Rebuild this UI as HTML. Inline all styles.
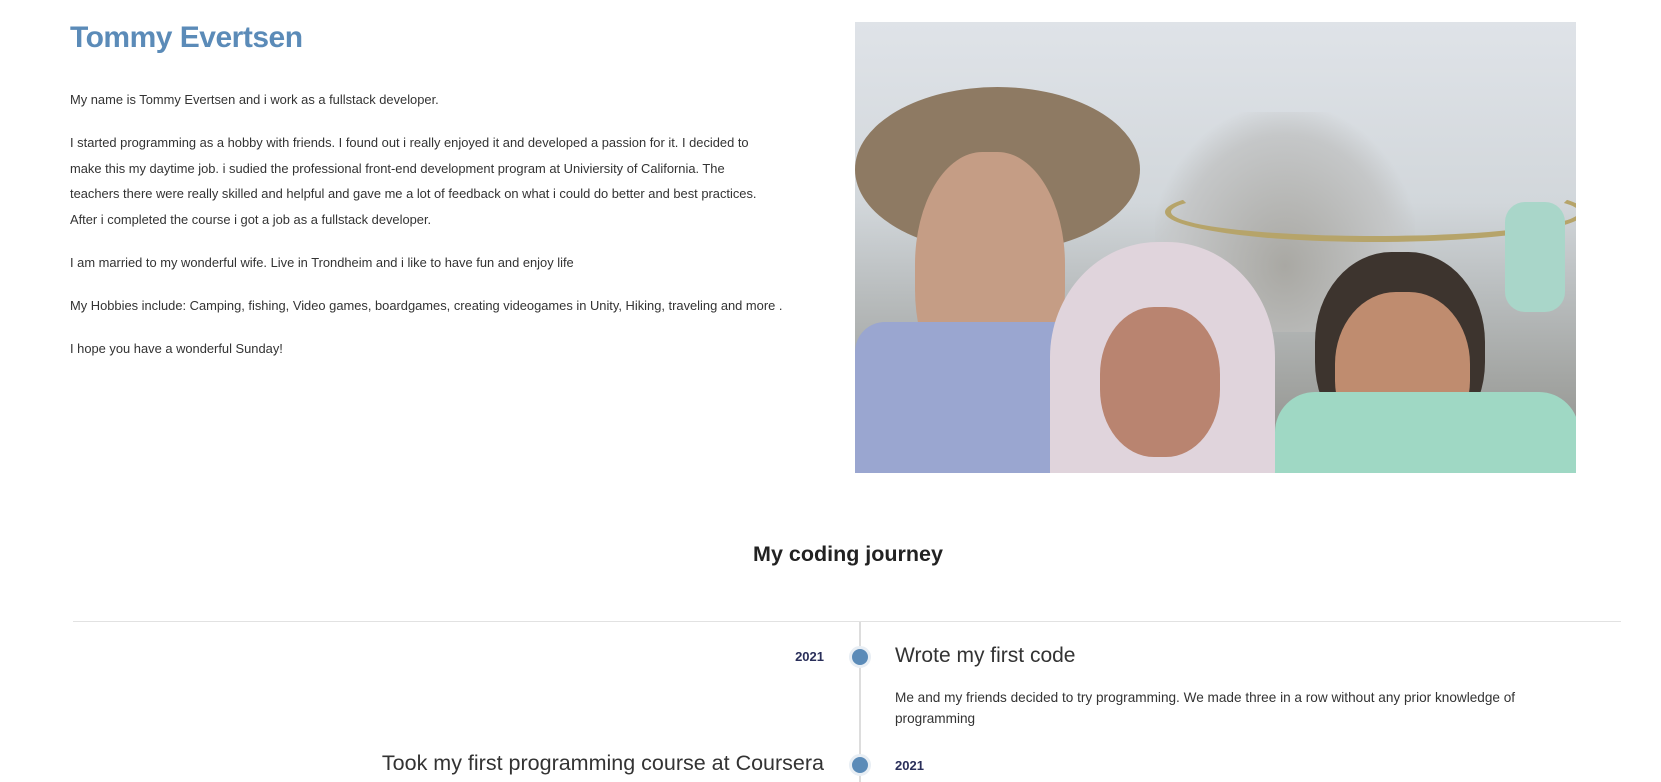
<!DOCTYPE html>
<html><head><meta charset="utf-8"><style>
*{margin:0;padding:0;box-sizing:border-box}
body{width:1661px;height:779px;overflow:hidden;background:#fff;font-family:"Liberation Sans",sans-serif;color:#333;position:relative}
h1{position:absolute;left:70px;top:21px;font-size:30px;font-weight:bold;color:#5b8bb8;letter-spacing:-0.5px}
.p{position:absolute;left:70px;font-size:12.9px;color:#333;white-space:nowrap}
.photo{position:absolute;left:855px;top:22px;width:721px;height:451px;overflow:hidden;background:linear-gradient(#dfe3e8,#d2d7db 40%,#b9bdbe 60%,#8c8c86)}
.photo div{position:absolute}
h2{position:absolute;left:0;width:1696px;text-align:center;top:542px;font-size:21.5px;font-weight:bold;color:#222}
.hr{position:absolute;left:73px;width:1548px;top:621px;height:1px;background:#e2e2e2}
.vl{position:absolute;left:859px;top:622px;width:2px;height:160px;background:#ddd}
.dot{position:absolute;width:22px;height:22px;border-radius:50%;background:#5b8bb8;border:3px solid #e8eef4;left:849px}
.yr{position:absolute;font-size:13px;font-weight:bold;color:#2a2f5a}
.t{position:absolute;font-size:21px;font-weight:300;color:#333;white-space:nowrap}
</style></head><body>
<h1>Tommy Evertsen</h1>
<div class="p" style="top:92px">My name is Tommy Evertsen and i work as a fullstack developer.</div>
<div class="p" style="top:130px;line-height:25.7px">I started programming as a hobby with friends. I found out i really enjoyed it and developed a passion for it. I decided to<br>make this my daytime job. i sudied the professional front-end development program at Univiersity of California. The<br>teachers there were really skilled and helpful and gave me a lot of feedback on what i could do better and best practices.<br>After i completed the course i got a job as a fullstack developer.</div>
<div class="p" style="top:255px">I am married to my wonderful wife. Live in Trondheim and i like to have fun and enjoy life</div>
<div class="p" style="top:298px">My Hobbies include: Camping, fishing, Video games, boardgames, creating videogames in Unity, Hiking, traveling and more .</div>
<div class="p" style="top:341px">I hope you have a wonderful Sunday!</div>
<div class="photo">
 <div style="left:300px;top:90px;width:260px;height:220px;background:radial-gradient(ellipse at 50% 70%,#a9a8a3,#c5c7c8 60%,transparent 75%)"></div>
 <div style="left:310px;top:160px;width:420px;height:60px;border-radius:50%;border:6px solid #b6a46a;border-top-color:transparent"></div>
 <div style="left:0;top:65px;width:285px;height:165px;border-radius:50%;background:#8e7a63"></div>
 <div style="left:60px;top:130px;width:150px;height:250px;border-radius:45%;background:#c59d85"></div>
 <div style="left:0;top:300px;width:230px;height:160px;background:#9aa6d0;border-radius:30px 30px 0 0"></div>
 <div style="left:195px;top:220px;width:225px;height:240px;border-radius:48% 48% 10px 10px;background:#e0d4dc"></div>
 <div style="left:245px;top:285px;width:120px;height:150px;border-radius:45%;background:#b98470"></div>
 <div style="left:460px;top:230px;width:170px;height:200px;border-radius:45%;background:#3d342e"></div>
 <div style="left:480px;top:270px;width:135px;height:160px;border-radius:45%;background:#bf8c6f"></div>
 <div style="left:420px;top:370px;width:304px;height:90px;border-radius:40px 40px 0 0;background:#9fd8c4"></div>
 <div style="left:650px;top:180px;width:60px;height:110px;border-radius:20px;background:#a9d6c9"></div>
</div>
<h2>My coding journey</h2>
<div class="hr"></div>
<div class="vl"></div>
<div class="dot" style="top:646px"></div>
<div class="yr" style="right:837px;top:649px">2021</div>
<div class="t" style="left:895px;top:644px">Wrote my first code</div>
<div class="p" style="left:895px;top:687px;line-height:21px;font-size:13.6px">Me and my friends decided to try programming. We made three in a row without any prior knowledge of<br>programming</div>
<div class="dot" style="top:754px"></div>
<div class="t" style="right:837px;top:751px;font-size:21.5px">Took my first programming course at Coursera</div>
<div class="yr" style="left:895px;top:758px">2021</div>
</body></html>
